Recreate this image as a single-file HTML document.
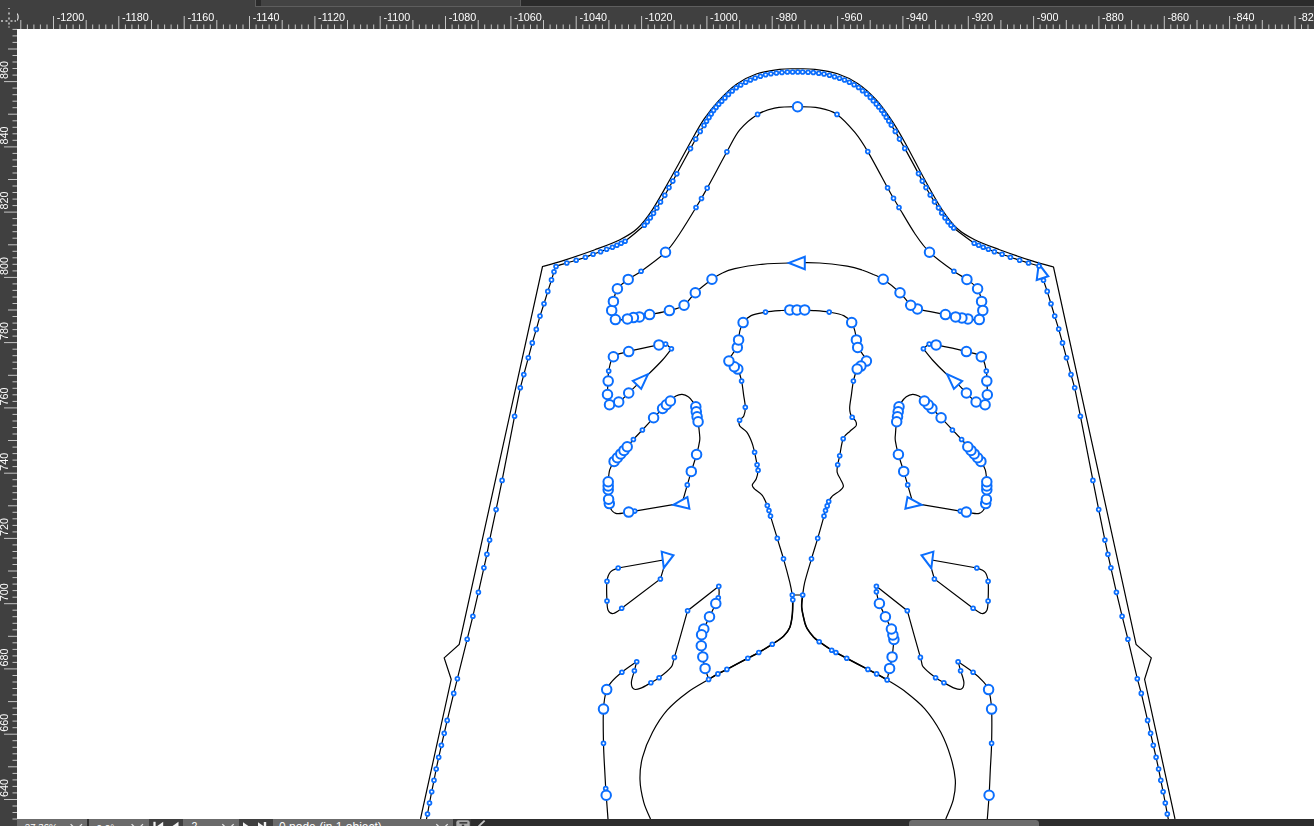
<!DOCTYPE html>
<html><head><meta charset="utf-8"><title>Canvas</title>
<style>
html,body{margin:0;padding:0;background:#fff;overflow:hidden}
body{width:1314px;height:826px;position:relative;font-family:"Liberation Sans",sans-serif}
#app{position:absolute;left:0;top:0;width:1314px;height:826px;overflow:hidden;background:#fff}
.abs{position:absolute}
#topband{left:0;top:0;width:1314px;height:29px;background:#404040}
#leftruler{left:0;top:0;width:17px;height:826px;background:#404040}
#tabline{left:255px;top:6px;width:1059px;height:1px;background:#5e5e5e}
#tabl{left:255px;top:0;width:1px;height:7px;background:#5e5e5e}
#tabdark{left:256px;top:0;width:5px;height:6px;background:#2b2b2b}
#tabmid{left:261px;top:0;width:259px;height:6px;background:#434343}
#tabsep{left:520px;top:0;width:1px;height:6px;background:#5a5a5a}
#tabright{left:521px;top:0;width:793px;height:6px;background:#2b2b2b}
#bottom{left:17px;top:819px;width:1297px;height:7px;background:#2d2d2d}
.fld{top:819px;height:7px;background:#6b6b6b;color:#fff;font-size:12px;line-height:14px;overflow:hidden;white-space:nowrap}
.fld span{position:absolute;top:2px}
#thumb{left:908.5px;top:820px;width:130.5px;height:10px;background:#6c6c6c;border-radius:3.5px}
svg{position:absolute;left:0;top:0}
</style></head><body><div id="app">
<div class="abs" id="topband"></div>
<div class="abs" id="leftruler"></div>
<div class="abs" id="tabline"></div><div class="abs" id="tabl"></div><div class="abs" id="tabdark"></div><div class="abs" id="tabmid"></div><div class="abs" id="tabsep"></div><div class="abs" id="tabright"></div>
<div class="abs" id="bottom"></div>
<div class="abs fld" style="left:17px;width:70px"></div>
<div class="abs fld" style="left:89px;width:60px"></div>
<div class="abs fld" style="left:183px;width:56px"></div>
<div class="abs fld" style="left:273px;width:180px"></div>
<div class="abs" style="left:149px;top:819px;width:34px;height:7px;background:#3f3f3f"></div>
<div class="abs" style="left:239px;top:819px;width:34px;height:7px;background:#3f3f3f"></div>
<div class="abs" style="left:453px;top:819px;width:18px;height:7px;background:#393939"></div>
<div class="abs" id="thumb"></div>
<svg width="1314" height="826" viewBox="0 0 1314 826">
<defs><clipPath id="cv"><rect x="17" y="29" width="1297" height="790"/></clipPath><clipPath id="tr"><rect x="17" y="7" width="1297" height="22"/></clipPath></defs>
<g clip-path="url(#cv)">
<g fill="none" stroke="#000" stroke-width="1.2" stroke-linejoin="miter">
<path d="M420.5 819L451.2 679.4L444.2 657.9L459.2 644.5L542.5 266.5C545.9 265.5 553.7 263.7 562.4 260.9C571.2 258.1 585.3 253.2 594.9 249.7C604.5 246.2 612.8 243.3 619.9 239.7C626.9 236.2 631.9 233.5 637.3 228.5C642.7 223.5 646.9 217.9 652.3 209.8C657.7 201.7 663.6 190.7 669.8 179.8C675.9 168.9 683.6 154.6 689.2 144.5C694.9 134.4 699 126.5 704 119.2C708.9 111.8 713.5 106.3 719 100.4C724.4 94.6 730.2 88.6 736.5 84.2C742.9 79.8 749.7 76.3 756.9 73.8C764.1 71.4 772.9 70.2 779.6 69.3C786.3 68.5 791.2 68.8 797.1 68.8C803 68.8 808.2 68.5 814.9 69.3C821.7 70.2 830.5 71.5 837.6 73.8C844.8 76.2 851.7 79.5 858 83.7C864.3 87.9 870.2 93.4 875.6 99.2C881 105 885.6 111.3 890.5 118.7C895.5 126 899.6 133 905.3 143.2C911 153.4 918.6 168.7 924.8 179.8C930.9 190.9 936.8 201.7 942.2 209.8C947.6 217.9 951.8 223.5 957.2 228.5C962.6 233.5 967.6 236.2 974.7 239.7C981.8 243.3 990.1 246.2 999.6 249.7C1009.2 253.2 1023.1 258.1 1032.1 260.9C1041.1 263.8 1049.9 266 1053.5 267L1136.1 644.5L1151.3 657.9L1144.6 679.4L1175 819"/>
<path d="M426.5 819L427.5 814L429.5 803L431.7 791.7L434 780.3L436.2 769L438.7 757.3L441.4 745.3L444.2 733.3L447.2 720.4L453.7 693.4L457.4 678.7L467.2 639.2L467.2 639.2L472.9 616.2L478.4 592.3L483.9 567.8L486.9 554.3L489.6 540.1L496.1 509.6L502.1 480.4L514.6 416.2L520.3 387.8L523.8 374.6L528.3 357.8L532.3 342.9L536.3 329.4L540 316.1L544 303.7L547.8 291.4L551.5 279.9L554 271.7C554.4 270.8 553.9 267.9 556 266.5C558.2 265 563.4 264 566.8 263C570.1 261.9 573.1 261.2 576.2 260.2C579.3 259.2 582.6 258.2 585.4 257.2C588.2 256.2 590.6 255.1 593.1 254.2C595.7 253.3 598.4 252.5 600.6 251.7C602.9 250.9 604.7 250 606.6 249.2C608.6 248.5 610.7 247.9 612.4 247.2C614.1 246.5 615.4 245.9 616.9 245.2C618.3 244.5 619.7 243.9 621.1 243.2C622.5 242.6 621.2 244.2 625.1 241.2C629 238.2 640.6 228.5 644.3 225.2C648 222 646.3 223 647.3 221.8C648.3 220.5 649.3 219.2 650.3 217.8C651.3 216.3 652.5 214.9 653.5 213.3C654.6 211.6 655.6 209.9 656.8 208C658 206.1 659.2 204.2 660.5 202C661.9 199.9 663.4 197.7 664.8 195.3C666.2 192.9 667.7 189.9 669 187.6C670.4 185.2 671.5 183.3 672.8 181.1C674.1 178.8 673.8 179.2 676.8 173.8C679.7 168.4 687.3 154.4 690.5 148.6C693.7 142.8 694.1 142 695.7 139.1C697.4 136.2 698.9 133.7 700.2 131.4C701.6 129.1 702.9 127.1 704 125.4C705 123.7 705.6 122.5 706.5 121.2C707.3 119.8 708.2 118.6 709 117.4C709.8 116.2 710.5 115.1 711.2 113.9C712 112.7 712.7 111.5 713.5 110.4C714.3 109.3 715.1 108.5 716 107.4C716.8 106.4 717.7 105.2 718.7 104.2C719.7 103.1 720.7 102.2 721.7 101.2C722.7 100.1 723.8 99.1 724.9 97.9C726.1 96.8 727.2 95.6 728.4 94.4C729.6 93.3 730.9 92.1 732.2 91C733.5 89.8 734.8 88.7 736.2 87.7C737.6 86.7 739.1 85.9 740.7 85C742.2 84 744 83 745.7 82.2C747.3 81.4 748.8 80.7 750.4 80C752 79.3 753.5 78.6 755.1 78C756.8 77.3 758.6 76.8 760.4 76.2C762.1 75.7 763.9 75.1 765.6 74.7C767.4 74.3 769.1 74 770.9 73.7C772.7 73.4 774.5 73.2 776.4 73C778.2 72.8 780 72.6 781.9 72.5C783.7 72.3 785.6 72.1 787.4 72C789.1 71.9 790.8 72 792.6 72C794.3 72 796.2 72 797.8 72C799.5 72 800.9 71.9 802.6 72C804.3 72 806.3 72.1 808.1 72.2C809.9 72.3 811.5 72.3 813.3 72.5C815.1 72.6 817 73 818.8 73.2C820.6 73.5 822.2 73.6 824 74C825.8 74.3 827.8 74.8 829.5 75.2C831.3 75.7 832.9 76.2 834.5 76.7C836.2 77.2 837.9 77.7 839.5 78.2C841.2 78.8 842.9 79.3 844.5 80C846.2 80.6 847.8 81.4 849.4 82.2C851 83 852.6 83.8 854.1 84.7C855.6 85.6 857.2 86.5 858.6 87.5C860 88.4 861.3 89.6 862.6 90.7C863.9 91.8 865.3 92.8 866.6 93.9C867.9 95.1 869.2 96.3 870.3 97.4C871.5 98.6 872.3 99.6 873.3 100.7C874.3 101.8 875.4 102.9 876.3 103.9C877.2 105 877.9 105.9 878.8 106.9C879.7 108 880.7 109 881.6 110.2C882.4 111.3 883.3 112.5 884.1 113.7C884.8 114.8 885.5 116 886.3 117.2C887.1 118.4 888 119.6 888.8 120.9C889.6 122.2 890.2 123.4 891.3 125.1C892.4 126.9 893.9 129.1 895.3 131.4C896.7 133.7 898 136.3 899.5 139.1C901.1 141.9 901.6 142.6 904.8 148.4C907.9 154.1 915.6 168.1 918.5 173.6C921.4 179 921 178.7 922.3 181.1C923.5 183.4 924.7 185.2 926 187.6C927.3 189.9 928.8 192.7 930.2 195C931.7 197.4 933.1 199.7 934.5 201.8C935.9 203.9 937.3 205.9 938.5 207.8C939.7 209.6 940.6 211.3 941.7 213C942.8 214.7 943.9 216.3 945 217.8C946 219.2 947 220.5 948 221.8C949 223 950 224.2 951 225.2C951.9 226.3 949.8 225 953.7 228C957.6 231 970 240.3 974.2 243.2C978.3 246.1 977.2 244.5 978.7 245.2C980.2 245.9 981.5 246.5 983.2 247.2C984.8 247.9 986.5 248.5 988.4 249.2C990.3 250 992.1 250.9 994.4 251.7C996.7 252.5 999.5 253.3 1002.1 254.2C1004.8 255.1 1007.5 256.2 1010.4 257.2C1013.3 258.2 1016.6 259.2 1019.6 260.2C1022.6 261.2 1025.3 262 1028.5 263C1031.7 263.9 1037.3 265.5 1039 266L1043.5 280.2L1047.2 291.4L1051 303.7L1054.7 316.1L1058.7 329.1L1062.5 342.9L1066.5 357.8L1071 374.6L1074.7 387.8L1080.4 416.2L1092.9 480.4L1098.7 509.6L1104.9 540.1L1107.9 554.3L1110.9 567.8L1116.4 592.3L1122.1 616.2L1127.9 639.2L1127.9 639.2L1137.3 678.7L1141.3 693.4L1147.6 720.4L1150.6 733.3L1153.3 745.3L1156.1 757.3L1158.6 769L1160.8 780.3L1163.1 791.7L1165.3 803L1167.3 814L1168.3 819"/>
<path d="M665.5 252.2C672 245.9 674.7 240.9 679.8 233.5C684.8 226 691.4 215.1 696 207.5C700.6 199.9 702.1 197.3 707.2 188.1C712.4 178.8 721.5 161.5 726.9 151.8C732.3 142.2 734.6 136.1 739.7 129.9C744.8 123.6 751.8 118 757.6 114.4C763.5 110.8 768 109.5 774.6 108.2C781.3 106.9 790 106.7 797.6 106.7C805.1 106.7 813.4 106.9 819.9 108.2C826.5 109.5 831.1 110.4 836.9 114.4C842.7 118.4 849.7 126.2 854.9 132.4C860 138.6 862.4 142.4 867.8 151.6C873.3 160.8 883.3 180 887.6 187.8C891.8 195.6 891.6 195 893.5 198.3C895.5 201.6 895.5 201.7 899 207.5C902.6 213.4 909.7 226 914.8 233.5C919.8 240.9 923 245.9 929.5 252.2C936 258.5 947.6 266.7 953.9 271.2C960.1 275.8 962.9 276.5 966.9 279.4C970.8 282.4 975.1 285 977.6 288.7C980 292.3 980.7 297.8 981.6 301.4C982.5 305 983.2 307.4 982.8 310.4C982.5 313.4 981.8 318.2 979.3 319.6C976.8 321.1 970.8 319.2 967.9 318.9C964.9 318.6 963.9 318.2 961.9 317.9C959.8 317.6 958.4 317.4 955.6 316.9C952.9 316.3 951.8 316 945.4 314.6C939 313.3 923.2 310.5 917.4 308.9C911.6 307.3 913.6 307.9 910.7 305.2C907.8 302.5 904.5 297 900 292.7C895.4 288.4 887.7 282.2 883.2 279.2C878.8 276.2 876.9 276 873.4 274.5C869.9 272.9 866.5 271.3 862.1 270C857.8 268.6 854.2 267.4 847.2 266.2C840.1 265.1 829.3 263.5 819.7 263C810.2 262.4 799.7 262.7 789.8 263C779.8 263.2 769 263.5 759.8 264.5C750.7 265.4 741.1 267.3 734.8 268.7C728.6 270.1 726.1 271.2 722.4 273C718.6 274.7 716.6 275.9 712.1 279.2C707.6 282.5 700 288.4 695.3 292.7C690.6 297 688.4 302.2 684.1 305.2C679.8 308.2 675.1 309.1 669.4 310.6C663.6 312.2 654.6 313.6 649.6 314.6C644.6 315.7 642.1 316.4 639.4 316.9C636.7 317.4 635.4 317.3 633.4 317.6C631.4 318 630.4 318.6 627.4 318.9C624.4 319.2 618.1 321.1 615.4 319.6C612.8 318.2 612 313.4 611.7 310.4C611.4 307.4 612.5 305 613.4 301.4C614.4 297.8 615 292.3 617.4 288.7C619.9 285 624.2 282.4 628.2 279.4C632.1 276.5 634.9 275.8 641.1 271.2C647.4 266.7 659.1 258.5 665.5 252.2Z"/>
<path d="M650.5 819C649.3 816.2 645.5 808.8 643.7 802.2C642 795.7 640.2 787.2 640 779.8C639.8 772.3 640.4 765.2 642.5 757.3C644.6 749.4 648.3 740.2 652.5 732.3C656.6 724.4 661.6 716.5 667.4 709.9C673.3 703.2 680.5 697.5 687.4 692.4C694.3 687.3 703.6 682.5 708.6 679.4C713.7 676.3 714.8 675.6 717.9 673.9C720.9 672.3 721.9 672.1 726.9 669.4C731.8 666.8 742.5 661 747.8 658.2C753.1 655.4 754.7 654.8 758.8 652.5C762.9 650.1 768.2 646.9 772.3 644.2C776.4 641.5 780.6 639 783.5 636.2C786.4 633.4 788.3 631.1 789.8 627.5C791.2 623.9 791.8 619.4 792.3 614.7C792.8 610.1 792.8 603 792.8 599.8C792.8 596.5 792.8 597.9 792.3 595C791.8 592.1 791.2 588.3 789.8 582.3C788.3 576.2 785.6 566.1 783.5 558.8C781.4 551.5 779.4 545.5 777.3 538.3C775.1 531.2 771.9 520.7 770.5 516.1C769.2 511.5 769.6 512.4 769 510.6C768.5 508.9 768.4 508.2 767.3 505.6C766.2 503.1 764.4 498.2 762.3 495.4C760.2 492.7 756.5 490.9 754.8 489.2C753.1 487.4 752.1 486.7 752.3 484.9C752.6 483.2 755.4 481.1 756.3 478.7C757.3 476.2 757.9 472.5 758.1 470.2C758.2 467.9 757.6 467.7 757.1 464.7C756.5 461.7 755.4 456 754.6 452.2C753.7 448.5 753.1 445.5 751.8 442.2C750.5 438.9 748.8 434.9 746.8 432.2C744.8 429.5 741 428 739.8 426C738.6 424 738.9 421.9 739.6 420.2C740.3 418.6 742.9 418.2 743.8 416C744.8 413.8 745.4 410.8 745.3 407.3C745.3 403.7 744.2 399.1 743.6 394.8C743 390.4 742.5 385.3 741.6 381.1C740.6 376.8 739 371.4 737.8 369.1C736.6 366.7 735.8 368.1 734.3 366.8C732.8 365.5 729.2 363.2 728.9 361.1C728.5 359 730.9 356.4 732.4 354.1C733.8 351.8 736.3 349.7 737.3 347.4C738.4 345 738.2 342.6 738.6 339.9C739 337.2 739.1 334 739.8 331.1C740.6 328.2 741.2 325.2 743.1 322.6C745 320.1 747.3 317.4 751.1 315.6C754.8 313.9 760.8 313 765.5 312.1C770.3 311.3 774.5 311 779.8 310.6C785 310.3 791.2 309.9 797 309.9C802.8 309.9 809.4 310.3 814.7 310.6C820.1 311 824.4 311.3 829.2 312.1C834 313 839.9 313.9 843.7 315.6C847.4 317.4 849.8 320.1 851.7 322.6C853.5 325.2 854.1 328.2 854.9 331.1C855.7 334 856 337.2 856.4 339.9C856.9 342.6 856.6 345 857.7 347.4C858.7 349.7 861.2 351.8 862.6 354.1C864.1 356.4 866.7 359.1 866.4 361.1C866.1 363.1 862.4 364.7 860.9 366.1C859.4 367.4 858.4 366.6 857.2 369.1C855.9 371.6 854.4 376.8 853.4 381.1C852.5 385.3 852 390.4 851.4 394.8C850.8 399.1 849.8 404.1 849.7 407.3C849.5 410.4 850 411.8 850.4 413.5C850.8 415.2 851.3 415.9 852.2 417.2C853.1 418.6 855.3 420 855.9 421.5C856.5 422.9 856.9 424.3 855.9 426C854.9 427.6 851.8 429.3 849.7 431.5C847.5 433.6 844.8 434.7 843.2 438.7C841.5 442.8 840.6 451.4 839.7 455.7C838.8 460.1 838.1 461.9 837.7 464.7C837.3 467.5 836.7 469.9 837.2 472.4C837.7 475 839.9 477.6 840.9 479.9C842 482.2 843.6 484.3 843.4 486.2C843.2 488 841.6 489.3 839.7 490.9C837.8 492.6 834 494.4 832.2 496.2C830.4 497.9 829.5 500 828.7 501.6C827.9 503.3 827.7 504.4 827.2 505.9C826.7 507.4 826 508.9 825.5 510.6C824.9 512.3 825.2 511.5 824 516.1C822.7 520.7 819.8 531.2 817.7 538.3C815.6 545.5 813.6 551.5 811.5 558.8C809.3 566.1 806.2 576.2 804.7 582.3C803.3 588.3 803.2 590.9 802.7 595C802.2 599.2 801.4 602.7 801.7 607.2C802.1 611.8 803.8 618.6 804.7 622.2C805.7 625.8 805.8 626.3 807.2 628.7C808.7 631.2 811.5 634.8 813.5 637C815.5 639.1 816.2 639.5 819.2 641.7C822.3 643.9 828.9 648.4 831.7 650.2C834.5 652 833.4 651.1 835.9 652.5C838.4 653.8 841.3 655.4 846.7 658.2C852 661 862.9 666.8 867.9 669.4C872.9 672.1 873.4 672.2 876.6 673.9C879.8 675.7 882.5 677 887.1 679.9C891.8 682.8 898.3 686.4 904.6 691.1C910.8 695.9 918.5 701.8 924.6 708.6C930.6 715.5 936.4 724.2 940.8 732.3C945.1 740.4 948.4 749.4 950.8 757.3C953.2 765.2 954.8 772.7 955.3 779.8C955.7 786.8 954.9 793.2 953.3 799.7C951.7 806.3 947 815.7 945.8 819"/>
<path d="M792.3 595L802.7 595" stroke-width="1.0"/>
<path d="M708.6 679.4C710.2 678.5 714.8 675.6 717.9 673.9C720.9 672.3 721.9 672.1 726.9 669.4C731.8 666.8 742.5 661 747.8 658.2C753.1 655.4 754.7 654.8 758.8 652.5C762.9 650.1 768.2 646.9 772.3 644.2C776.4 641.5 780.6 639 783.5 636.2C786.4 633.4 788.3 631.1 789.8 627.5C791.2 623.9 791.8 619.4 792.3 614.7C792.8 610.1 792.7 602.2 792.8 599.8" stroke-width="1.55"/>
<path d="M802.7 595C802.6 597 801.4 602.7 801.7 607.2C802.1 611.8 803.8 618.6 804.7 622.2C805.7 625.8 805.8 626.3 807.2 628.7C808.7 631.2 811.5 634.8 813.5 637C815.5 639.1 816.2 639.5 819.2 641.7C822.3 643.9 828.9 648.4 831.7 650.2C834.5 652 833.4 651.1 835.9 652.5C838.4 653.8 841.3 655.4 846.7 658.2C852 661 862.9 666.8 867.9 669.4C872.9 672.1 873.4 672.2 876.6 673.9C879.8 675.7 885.4 678.9 887.1 679.9" stroke-width="1.55"/>
<path d="M671.4 348.8C669.9 350.7 666.2 355.9 662.5 360C658.8 364.1 653 369.8 649.4 373.3C645.8 376.8 644.4 377.8 640.9 381.1C637.4 384.3 630.7 391 628.7 393C627 394.5 621.9 400.1 618.7 402C615.5 404 611.3 406 609.5 404.8C607.6 403.5 607.7 398.5 607.5 394.5C607.2 390.6 608 385 608.2 381.1C608.4 377.1 607.8 375.1 608.7 371.1C609.6 367 610.1 360.1 613.4 356.8C616.8 353.6 621.1 353.6 628.7 351.6C636.2 349.6 652.7 346.1 658.9 344.9C665 343.6 663.5 343.4 665.6 344.1C667.7 344.8 670.4 348 671.4 348.8Z"/>
<path d="M923.4 348.8C924.9 350.7 928.8 355.9 932.5 360C936.2 364.1 941.9 369.8 945.6 373.3C949.3 376.8 951.4 377.8 954.9 381.1C958.3 384.3 964.4 391 966.4 393C968 394.5 973 400.1 976.1 402C979.2 404 983.2 406 985.1 404.8C987 403.6 987 398.7 987.3 394.8C987.6 390.8 987 385 986.8 381.1C986.7 377.1 987.2 375.1 986.3 371.1C985.4 367 984.7 360.1 981.3 356.8C978 353.6 973.9 353.6 966.4 351.6C958.8 349.6 942.4 346.1 936.1 344.9C929.9 343.6 931.3 343.4 929.2 344.1C927 344.8 924.4 348 923.4 348.8Z"/>
<path d="M682.1 503.1L634.7 511.1C633.7 511.3 630.7 511.8 628.7 512.1C626.7 512.5 624.5 512.9 622.8 513.2C621.1 513.5 619.6 513.7 618.3 513.7C617 513.7 616.1 513.5 615.2 513.1C614.3 512.8 613.6 512.2 612.9 511.6C612.2 511 611.5 510.2 611 509.3C610.5 508.4 609.9 507.4 609.6 506.5C609.3 505.6 609.5 504.8 609.3 503.6C609.1 502.4 608.8 501.5 608.6 499.2C608.4 496.9 608.3 492 608.2 489.8C608.1 487.6 608.2 487.2 608.2 485.9C608.2 484.5 608 484.4 608.2 481.7C608.5 479 608.7 473.3 609.7 469.9C610.7 466.5 612.8 463.4 614.1 461.4C615.4 459.4 616.3 458.9 617.4 457.7C618.5 456.4 619.7 455.1 620.8 453.9C621.9 452.7 622.9 451.6 624 450.4C625.1 449.2 625.6 448.5 627.2 446.7C628.8 444.9 630.9 442.3 633.4 439.5C635.9 436.7 639 433.6 642.4 430C645.8 426.3 650.3 421.3 653.6 417.7C657 414.2 660.5 410.7 662.6 408.5C664.7 406.3 665.1 406 666.4 404.8C667.7 403.5 668.8 402.5 670.4 401C671.9 399.6 673.9 397.1 675.9 396C677.8 394.9 680 394.2 682.1 394.3C684.2 394.4 686.5 395.4 688.3 396.8C690.2 398.1 692.1 400.6 693.3 402.3C694.6 403.9 695.3 405.2 695.8 406.8C696.3 408.3 696.1 410.1 696.3 411.8C696.5 413.4 696.8 415.1 697.1 416.7C697.4 418.4 697.7 418.7 698.1 421.7C698.5 424.7 699.3 431.5 699.6 434.7C699.8 438 700.1 437.9 699.6 441.2C699.1 444.5 698 449.5 696.6 454.5C695.2 459.5 692.8 466.3 691.3 471.4C689.8 476.5 688 482.6 687.3 484.9L682.1 503.1Z"/>
<path d="M912.9 503.1L960.3 511.1C961.3 511.3 964.3 511.8 966.3 512.1C968.3 512.5 970.5 512.9 972.2 513.2C973.9 513.5 975.4 513.7 976.7 513.7C978 513.7 978.9 513.5 979.8 513.1C980.7 512.8 981.4 512.2 982.1 511.6C982.8 511 983.5 510.2 984 509.3C984.5 508.4 985.1 507.4 985.4 506.5C985.7 505.6 985.5 504.8 985.7 503.6C985.9 502.4 986.2 501.5 986.4 499.2C986.6 496.9 986.7 492 986.8 489.8C986.9 487.6 986.8 487.2 986.8 485.9C986.8 484.5 987 484.4 986.8 481.7C986.5 479 986.3 473.3 985.3 469.9C984.3 466.5 982.2 463.4 980.9 461.4C979.6 459.4 978.7 458.9 977.6 457.7C976.5 456.4 975.3 455.1 974.2 453.9C973.1 452.7 972.1 451.6 971 450.4C969.9 449.2 969.4 448.5 967.8 446.7C966.2 444.9 966.1 444.3 961.6 439.5C957.1 434.7 946 422.9 941 417.7C936.1 412.6 934.2 410.7 932 408.5C929.9 406.3 929.5 406 928.3 404.8C927.1 403.5 926.1 402.5 924.6 401C923 399.6 920.8 397.1 918.8 396C916.8 394.9 914.7 394.2 912.6 394.3C910.5 394.4 908.2 395.4 906.3 396.8C904.5 398.1 902.5 400.6 901.3 402.3C900.1 403.9 899.6 405.2 899.1 406.8C898.6 408.3 898.6 410.1 898.4 411.8C898.1 413.4 897.9 415.1 897.6 416.7C897.3 418.4 897 418.7 896.6 421.7C896.2 424.7 895.6 431.5 895.4 434.7C895.1 438 894.9 437.9 895.4 441.2C895.9 444.5 897 449.5 898.4 454.5C899.8 459.5 902.2 466.3 903.7 471.4C905.2 476.5 907 482.6 907.7 484.9L912.9 503.1Z"/>
<path d="M666.3 559.5L660.4 579L621.7 608.2C620.3 609.1 615.7 613.1 613.4 613.5C611.2 613.9 609.3 612.6 608.2 610.5C607.1 608.4 607.2 605.9 607 601C606.7 596.1 606.4 586.1 607 581.3C607.5 576.4 608.6 574 610.5 571.8C612.3 569.6 616.9 568.7 618.2 568L666.3 559.5Z"/>
<path d="M928.8 559.5L934.4 579L973.1 608.2C974.5 609.1 979.3 613.1 981.6 613.5C983.9 613.9 985.7 612.6 986.8 610.5C987.9 608.4 987.9 605.9 988.1 601C988.3 596.1 988.6 586.1 988.1 581.3C987.5 576.4 986.7 574 984.8 571.8C983 569.6 978.2 568.7 976.8 568L928.8 559.5Z"/>
<path d="M718.8 586.3L687.6 610.7C685.4 618.5 677.1 648 674.4 657.4C671.6 666.9 673.4 664.1 670.9 667.4C668.3 670.8 662.5 675.1 659.1 677.7C655.8 680.2 653.9 680.9 650.9 682.7C647.9 684.4 643.7 687.1 640.9 688.1C638.1 689.2 635.5 690.1 633.9 689.1C632.3 688.2 631.3 685.5 631.4 682.4C631.5 679.3 633.5 674.1 634.4 670.7C635.3 667.2 636.3 663.2 636.7 661.7C634.2 663.4 626 668.9 621.9 672.2C617.9 675.4 614.7 678.2 612.2 681.2C609.7 684.1 608.2 685 606.7 689.6C605.2 694.3 604 700.2 603.5 709.1C602.9 718.1 603.3 733.2 603.5 743.3C603.7 753.4 604.3 762.2 604.7 769.8C605.1 777.3 605.5 784.3 605.7 788.5C606 792.7 605.8 790.2 606.2 795.2C606.6 800.3 607.7 815 608 819"/>
<path d="M718.8 586.3C718.8 587.7 719.5 591.9 719 594.8C718.5 597.6 717.4 599.8 715.8 603.5C714.2 607.2 711.5 612.5 709.5 616.7C707.6 621 705.1 626 703.8 629C702.5 632 702 631.9 701.6 634.7C701.1 637.5 701.1 642 701.3 645.7C701.5 649.4 702.2 653.2 702.8 656.9C703.4 660.7 704.1 664.7 705.1 668.4C706.1 672.2 708.2 677.6 708.8 679.4"/>
<path d="M876.4 586.3C876.4 587.2 875.9 588.9 876.4 591.8C876.9 594.6 877.9 599.3 879.4 603.5C880.9 607.7 883.4 612.5 885.4 616.7C887.4 621 890 626 891.4 629C892.7 632 892.9 632.9 893.4 634.7C893.8 636.5 894.1 635.8 893.9 639.5C893.6 643.2 892.8 652.1 892.1 656.9C891.4 661.8 890.4 664.6 889.6 668.4C888.8 672.3 887.5 678 887.1 679.9"/>
<path d="M876.4 586.3L907.3 610.7C909.5 618.5 917.7 648 920.4 657.4C923.1 666.9 921.1 664.1 923.7 667.4C926.2 670.8 932.3 675.1 935.6 677.7C939 680.2 940.8 680.9 943.9 682.7C947 684.4 951.5 687.1 954.4 688.1C957.3 689.2 959.8 690.1 961.4 689.1C962.9 688.2 964 685.5 963.9 682.4C963.7 679.3 961.6 674.1 960.6 670.7C959.7 667.2 958.5 663.2 958.1 661.7C960.6 663.4 969 668.9 973.1 672.2C977.2 675.4 980.3 678.2 982.8 681.2C985.4 684.1 987.1 685 988.6 689.6C990 694.3 991.1 700.2 991.6 709.1C992.1 718.1 991.8 733.2 991.6 743.3C991.4 753.4 990.7 761.1 990.3 769.8C989.9 778.4 989.6 787 989.1 795.2C988.6 803.4 987.6 815 987.3 819"/>
</g>
<g fill="#fff" stroke="#0b6efd" stroke-width="2">
<path d="M1038.8 263.8L1036.7 280L1048.3 276.3Z"/>
<circle cx="1039" cy="266" r="1.95" stroke-width="1.75"/>
<circle cx="1028.5" cy="263" r="1.95" stroke-width="1.75"/>
<circle cx="1019.6" cy="260.2" r="1.95" stroke-width="1.75"/>
<circle cx="1010.4" cy="257.2" r="1.95" stroke-width="1.75"/>
<circle cx="1002.1" cy="254.2" r="1.95" stroke-width="1.75"/>
<circle cx="994.4" cy="251.7" r="1.95" stroke-width="1.75"/>
<circle cx="988.4" cy="249.2" r="1.95" stroke-width="1.75"/>
<circle cx="983.2" cy="247.2" r="1.95" stroke-width="1.75"/>
<circle cx="978.7" cy="245.2" r="1.95" stroke-width="1.75"/>
<circle cx="974.2" cy="243.2" r="1.95" stroke-width="1.75"/>
<circle cx="953.7" cy="228" r="1.95" stroke-width="1.75"/>
<circle cx="951" cy="225.2" r="1.95" stroke-width="1.75"/>
<circle cx="948" cy="221.8" r="1.95" stroke-width="1.75"/>
<circle cx="945" cy="217.8" r="1.95" stroke-width="1.75"/>
<circle cx="941.7" cy="213" r="1.95" stroke-width="1.75"/>
<circle cx="938.5" cy="207.8" r="1.95" stroke-width="1.75"/>
<circle cx="934.5" cy="201.8" r="1.95" stroke-width="1.75"/>
<circle cx="930.2" cy="195" r="1.95" stroke-width="1.75"/>
<circle cx="926" cy="187.6" r="1.95" stroke-width="1.75"/>
<circle cx="922.3" cy="181.1" r="1.95" stroke-width="1.75"/>
<circle cx="918.5" cy="173.6" r="1.95" stroke-width="1.75"/>
<circle cx="904.8" cy="148.4" r="1.95" stroke-width="1.75"/>
<circle cx="899.5" cy="139.1" r="1.95" stroke-width="1.75"/>
<circle cx="895.3" cy="131.4" r="1.95" stroke-width="1.75"/>
<circle cx="891.3" cy="125.1" r="1.95" stroke-width="1.75"/>
<circle cx="888.8" cy="120.9" r="1.95" stroke-width="1.75"/>
<circle cx="886.3" cy="117.2" r="1.95" stroke-width="1.75"/>
<circle cx="884.1" cy="113.7" r="1.95" stroke-width="1.75"/>
<circle cx="881.6" cy="110.2" r="1.95" stroke-width="1.75"/>
<circle cx="878.8" cy="106.9" r="1.95" stroke-width="1.75"/>
<circle cx="876.3" cy="103.9" r="1.95" stroke-width="1.75"/>
<circle cx="873.3" cy="100.7" r="1.95" stroke-width="1.75"/>
<circle cx="870.3" cy="97.4" r="1.95" stroke-width="1.75"/>
<circle cx="866.6" cy="93.9" r="1.95" stroke-width="1.75"/>
<circle cx="862.6" cy="90.7" r="1.95" stroke-width="1.75"/>
<circle cx="858.6" cy="87.5" r="1.95" stroke-width="1.75"/>
<circle cx="854.1" cy="84.7" r="1.95" stroke-width="1.75"/>
<circle cx="849.4" cy="82.2" r="1.95" stroke-width="1.75"/>
<circle cx="844.5" cy="80" r="1.95" stroke-width="1.75"/>
<circle cx="839.5" cy="78.2" r="1.95" stroke-width="1.75"/>
<circle cx="834.5" cy="76.7" r="1.95" stroke-width="1.75"/>
<circle cx="829.5" cy="75.2" r="1.95" stroke-width="1.75"/>
<circle cx="824" cy="74" r="1.95" stroke-width="1.75"/>
<circle cx="818.8" cy="73.2" r="1.95" stroke-width="1.75"/>
<circle cx="813.3" cy="72.5" r="1.95" stroke-width="1.75"/>
<circle cx="808.1" cy="72.2" r="1.95" stroke-width="1.75"/>
<circle cx="802.6" cy="72" r="1.95" stroke-width="1.75"/>
<circle cx="797.8" cy="72" r="1.95" stroke-width="1.75"/>
<circle cx="792.6" cy="72" r="1.95" stroke-width="1.75"/>
<circle cx="787.4" cy="72" r="1.95" stroke-width="1.75"/>
<circle cx="781.9" cy="72.5" r="1.95" stroke-width="1.75"/>
<circle cx="776.4" cy="73" r="1.95" stroke-width="1.75"/>
<circle cx="770.9" cy="73.7" r="1.95" stroke-width="1.75"/>
<circle cx="765.6" cy="74.7" r="1.95" stroke-width="1.75"/>
<circle cx="760.4" cy="76.2" r="1.95" stroke-width="1.75"/>
<circle cx="755.1" cy="78" r="1.95" stroke-width="1.75"/>
<circle cx="750.4" cy="80" r="1.95" stroke-width="1.75"/>
<circle cx="745.7" cy="82.2" r="1.95" stroke-width="1.75"/>
<circle cx="740.7" cy="85" r="1.95" stroke-width="1.75"/>
<circle cx="736.2" cy="87.7" r="1.95" stroke-width="1.75"/>
<circle cx="732.2" cy="91" r="1.95" stroke-width="1.75"/>
<circle cx="728.4" cy="94.4" r="1.95" stroke-width="1.75"/>
<circle cx="724.9" cy="97.9" r="1.95" stroke-width="1.75"/>
<circle cx="721.7" cy="101.2" r="1.95" stroke-width="1.75"/>
<circle cx="718.7" cy="104.2" r="1.95" stroke-width="1.75"/>
<circle cx="716" cy="107.4" r="1.95" stroke-width="1.75"/>
<circle cx="713.5" cy="110.4" r="1.95" stroke-width="1.75"/>
<circle cx="711.2" cy="113.9" r="1.95" stroke-width="1.75"/>
<circle cx="709" cy="117.4" r="1.95" stroke-width="1.75"/>
<circle cx="706.5" cy="121.2" r="1.95" stroke-width="1.75"/>
<circle cx="704" cy="125.4" r="1.95" stroke-width="1.75"/>
<circle cx="700.2" cy="131.4" r="1.95" stroke-width="1.75"/>
<circle cx="695.7" cy="139.1" r="1.95" stroke-width="1.75"/>
<circle cx="690.5" cy="148.6" r="1.95" stroke-width="1.75"/>
<circle cx="676.8" cy="173.8" r="1.95" stroke-width="1.75"/>
<circle cx="672.8" cy="181.1" r="1.95" stroke-width="1.75"/>
<circle cx="669" cy="187.6" r="1.95" stroke-width="1.75"/>
<circle cx="664.8" cy="195.3" r="1.95" stroke-width="1.75"/>
<circle cx="660.5" cy="202" r="1.95" stroke-width="1.75"/>
<circle cx="656.8" cy="208" r="1.95" stroke-width="1.75"/>
<circle cx="653.5" cy="213.3" r="1.95" stroke-width="1.75"/>
<circle cx="650.3" cy="217.8" r="1.95" stroke-width="1.75"/>
<circle cx="647.3" cy="221.8" r="1.95" stroke-width="1.75"/>
<circle cx="644.3" cy="225.2" r="1.95" stroke-width="1.75"/>
<circle cx="625.1" cy="241.2" r="1.95" stroke-width="1.75"/>
<circle cx="621.1" cy="243.2" r="1.95" stroke-width="1.75"/>
<circle cx="616.9" cy="245.2" r="1.95" stroke-width="1.75"/>
<circle cx="612.4" cy="247.2" r="1.95" stroke-width="1.75"/>
<circle cx="606.6" cy="249.2" r="1.95" stroke-width="1.75"/>
<circle cx="600.6" cy="251.7" r="1.95" stroke-width="1.75"/>
<circle cx="593.1" cy="254.2" r="1.95" stroke-width="1.75"/>
<circle cx="585.4" cy="257.2" r="1.95" stroke-width="1.75"/>
<circle cx="576.2" cy="260.2" r="1.95" stroke-width="1.75"/>
<circle cx="566.8" cy="263" r="1.95" stroke-width="1.75"/>
<circle cx="556" cy="266.5" r="1.95" stroke-width="1.75"/>
<circle cx="554" cy="271.7" r="1.95" stroke-width="1.75"/>
<circle cx="551.5" cy="279.9" r="1.95" stroke-width="1.75"/>
<circle cx="547.8" cy="291.4" r="1.95" stroke-width="1.75"/>
<circle cx="544" cy="303.7" r="1.95" stroke-width="1.75"/>
<circle cx="540" cy="316.1" r="1.95" stroke-width="1.75"/>
<circle cx="536.3" cy="329.4" r="1.95" stroke-width="1.75"/>
<circle cx="532.3" cy="342.9" r="1.95" stroke-width="1.75"/>
<circle cx="528.3" cy="357.8" r="1.95" stroke-width="1.75"/>
<circle cx="523.8" cy="374.6" r="1.95" stroke-width="1.75"/>
<circle cx="520.3" cy="387.8" r="1.95" stroke-width="1.75"/>
<circle cx="514.6" cy="416.2" r="1.95" stroke-width="1.75"/>
<circle cx="502.1" cy="480.4" r="1.95" stroke-width="1.75"/>
<circle cx="496.1" cy="509.6" r="1.95" stroke-width="1.75"/>
<circle cx="489.6" cy="540.1" r="1.95" stroke-width="1.75"/>
<circle cx="486.9" cy="554.3" r="1.95" stroke-width="1.75"/>
<circle cx="483.9" cy="567.8" r="1.95" stroke-width="1.75"/>
<circle cx="478.4" cy="592.3" r="1.95" stroke-width="1.75"/>
<circle cx="472.9" cy="616.2" r="1.95" stroke-width="1.75"/>
<circle cx="467.2" cy="639.2" r="1.95" stroke-width="1.75"/>
<circle cx="457.4" cy="678.7" r="1.95" stroke-width="1.75"/>
<circle cx="453.7" cy="693.4" r="1.95" stroke-width="1.75"/>
<circle cx="447.2" cy="720.4" r="1.95" stroke-width="1.75"/>
<circle cx="444.2" cy="733.3" r="1.95" stroke-width="1.75"/>
<circle cx="441.4" cy="745.3" r="1.95" stroke-width="1.75"/>
<circle cx="438.7" cy="757.3" r="1.95" stroke-width="1.75"/>
<circle cx="436.2" cy="769" r="1.95" stroke-width="1.75"/>
<circle cx="434" cy="780.3" r="1.95" stroke-width="1.75"/>
<circle cx="431.7" cy="791.7" r="1.95" stroke-width="1.75"/>
<circle cx="429.5" cy="803" r="1.95" stroke-width="1.75"/>
<circle cx="427.5" cy="814" r="1.95" stroke-width="1.75"/>
<circle cx="1167.3" cy="814" r="1.95" stroke-width="1.75"/>
<circle cx="1165.3" cy="803" r="1.95" stroke-width="1.75"/>
<circle cx="1163.1" cy="791.7" r="1.95" stroke-width="1.75"/>
<circle cx="1160.8" cy="780.3" r="1.95" stroke-width="1.75"/>
<circle cx="1158.6" cy="769" r="1.95" stroke-width="1.75"/>
<circle cx="1156.1" cy="757.3" r="1.95" stroke-width="1.75"/>
<circle cx="1153.3" cy="745.3" r="1.95" stroke-width="1.75"/>
<circle cx="1150.6" cy="733.3" r="1.95" stroke-width="1.75"/>
<circle cx="1147.6" cy="720.4" r="1.95" stroke-width="1.75"/>
<circle cx="1141.3" cy="693.4" r="1.95" stroke-width="1.75"/>
<circle cx="1137.3" cy="678.7" r="1.95" stroke-width="1.75"/>
<circle cx="1127.9" cy="639.2" r="1.95" stroke-width="1.75"/>
<circle cx="1122.1" cy="616.2" r="1.95" stroke-width="1.75"/>
<circle cx="1116.4" cy="592.3" r="1.95" stroke-width="1.75"/>
<circle cx="1110.9" cy="567.8" r="1.95" stroke-width="1.75"/>
<circle cx="1107.9" cy="554.3" r="1.95" stroke-width="1.75"/>
<circle cx="1104.9" cy="540.1" r="1.95" stroke-width="1.75"/>
<circle cx="1098.7" cy="509.6" r="1.95" stroke-width="1.75"/>
<circle cx="1092.9" cy="480.4" r="1.95" stroke-width="1.75"/>
<circle cx="1080.4" cy="416.2" r="1.95" stroke-width="1.75"/>
<circle cx="1074.7" cy="387.8" r="1.95" stroke-width="1.75"/>
<circle cx="1071" cy="374.6" r="1.95" stroke-width="1.75"/>
<circle cx="1066.5" cy="357.8" r="1.95" stroke-width="1.75"/>
<circle cx="1062.5" cy="342.9" r="1.95" stroke-width="1.75"/>
<circle cx="1058.7" cy="329.1" r="1.95" stroke-width="1.75"/>
<circle cx="1054.7" cy="316.1" r="1.95" stroke-width="1.75"/>
<circle cx="1051" cy="303.7" r="1.95" stroke-width="1.75"/>
<circle cx="1047.2" cy="291.4" r="1.95" stroke-width="1.75"/>
<circle cx="1043.5" cy="280.2" r="1.95" stroke-width="1.75"/>
<path d="M788.9 262.9L804.8 256.7L804.8 269.2Z"/>
<circle cx="712" cy="279.2" r="4.75"/>
<circle cx="695.3" cy="292.7" r="4.75"/>
<circle cx="684.1" cy="305.2" r="4.75"/>
<circle cx="669.4" cy="310.6" r="4.75"/>
<circle cx="649.6" cy="314.6" r="4.75"/>
<circle cx="639.4" cy="316.9" r="4.75"/>
<circle cx="633.4" cy="317.6" r="4.75"/>
<circle cx="627.4" cy="318.9" r="4.75"/>
<circle cx="615.4" cy="319.6" r="4.75"/>
<circle cx="611.7" cy="310.4" r="4.75"/>
<circle cx="613.4" cy="301.4" r="4.75"/>
<circle cx="617.4" cy="288.7" r="4.75"/>
<circle cx="628.2" cy="279.4" r="4.75"/>
<circle cx="641.1" cy="271.2" r="1.95" stroke-width="1.75"/>
<circle cx="665.5" cy="252.2" r="4.75"/>
<circle cx="696" cy="207.5" r="1.95" stroke-width="1.75"/>
<circle cx="701.5" cy="198.5" r="1.95" stroke-width="1.75"/>
<circle cx="707.2" cy="188.1" r="1.95" stroke-width="1.75"/>
<circle cx="726.9" cy="151.8" r="1.95" stroke-width="1.75"/>
<circle cx="757.6" cy="114.4" r="1.95" stroke-width="1.75"/>
<circle cx="797.6" cy="106.7" r="4.75"/>
<circle cx="837" cy="114.4" r="1.95" stroke-width="1.75"/>
<circle cx="867.8" cy="151.6" r="1.95" stroke-width="1.75"/>
<circle cx="887.6" cy="187.8" r="1.95" stroke-width="1.75"/>
<circle cx="893.5" cy="198.3" r="1.95" stroke-width="1.75"/>
<circle cx="899" cy="207.5" r="1.95" stroke-width="1.75"/>
<circle cx="929.5" cy="252.2" r="4.75"/>
<circle cx="953.9" cy="271.2" r="1.95" stroke-width="1.75"/>
<circle cx="966.9" cy="279.4" r="4.75"/>
<circle cx="977.6" cy="288.7" r="4.75"/>
<circle cx="981.6" cy="301.4" r="4.75"/>
<circle cx="982.8" cy="310.4" r="4.75"/>
<circle cx="979.3" cy="319.6" r="4.75"/>
<circle cx="967.9" cy="318.9" r="4.75"/>
<circle cx="961.9" cy="317.9" r="4.75"/>
<circle cx="955.6" cy="316.9" r="4.75"/>
<circle cx="945.4" cy="314.6" r="4.75"/>
<circle cx="917.4" cy="308.9" r="4.75"/>
<circle cx="910.7" cy="305.2" r="4.75"/>
<circle cx="900" cy="292.7" r="4.75"/>
<circle cx="883.2" cy="279.2" r="4.75"/>
<circle cx="708.6" cy="679.4" r="1.95" stroke-width="1.75"/>
<circle cx="717.9" cy="673.9" r="1.95" stroke-width="1.75"/>
<circle cx="726.9" cy="669.4" r="1.95" stroke-width="1.75"/>
<circle cx="747.8" cy="658.2" r="1.95" stroke-width="1.75"/>
<circle cx="758.8" cy="652.5" r="1.95" stroke-width="1.75"/>
<circle cx="772.3" cy="644.2" r="1.95" stroke-width="1.75"/>
<circle cx="792.8" cy="599.8" r="1.95" stroke-width="1.75"/>
<circle cx="792.3" cy="595" r="1.95" stroke-width="1.75"/>
<circle cx="783.5" cy="558.8" r="1.95" stroke-width="1.75"/>
<circle cx="777.3" cy="538.3" r="1.95" stroke-width="1.75"/>
<circle cx="770.5" cy="516.1" r="1.95" stroke-width="1.75"/>
<circle cx="769" cy="510.6" r="1.95" stroke-width="1.75"/>
<circle cx="767.3" cy="505.6" r="1.95" stroke-width="1.75"/>
<circle cx="758.1" cy="470.2" r="1.95" stroke-width="1.75"/>
<circle cx="757.1" cy="464.7" r="1.95" stroke-width="1.75"/>
<circle cx="754.6" cy="452.2" r="1.95" stroke-width="1.75"/>
<circle cx="739.6" cy="420.2" r="1.95" stroke-width="1.75"/>
<circle cx="745.3" cy="407.3" r="1.95" stroke-width="1.75"/>
<circle cx="741.6" cy="381.1" r="1.95" stroke-width="1.75"/>
<circle cx="737.8" cy="369.1" r="4.75"/>
<circle cx="734.3" cy="366.8" r="4.75"/>
<circle cx="728.9" cy="361.1" r="4.75"/>
<circle cx="737.3" cy="347.4" r="4.75"/>
<circle cx="738.6" cy="339.9" r="4.75"/>
<circle cx="743.1" cy="322.6" r="4.75"/>
<circle cx="765.5" cy="312.1" r="1.95" stroke-width="1.75"/>
<circle cx="789.8" cy="309.9" r="4.75"/>
<circle cx="797" cy="309.9" r="4.75"/>
<circle cx="804.7" cy="309.9" r="4.75"/>
<circle cx="829.2" cy="312.1" r="1.95" stroke-width="1.75"/>
<circle cx="851.7" cy="322.6" r="4.75"/>
<circle cx="856.4" cy="339.9" r="4.75"/>
<circle cx="857.7" cy="347.4" r="4.75"/>
<circle cx="866.4" cy="361.1" r="4.75"/>
<circle cx="860.9" cy="366.1" r="4.75"/>
<circle cx="857.2" cy="369.1" r="4.75"/>
<circle cx="853.4" cy="381.1" r="1.95" stroke-width="1.75"/>
<circle cx="852.2" cy="417.2" r="1.95" stroke-width="1.75"/>
<circle cx="843.2" cy="438.7" r="1.95" stroke-width="1.75"/>
<circle cx="839.7" cy="455.7" r="1.95" stroke-width="1.75"/>
<circle cx="837.7" cy="464.7" r="1.95" stroke-width="1.75"/>
<circle cx="828.7" cy="501.6" r="1.95" stroke-width="1.75"/>
<circle cx="827.2" cy="505.9" r="1.95" stroke-width="1.75"/>
<circle cx="825.5" cy="510.6" r="1.95" stroke-width="1.75"/>
<circle cx="824" cy="516.1" r="1.95" stroke-width="1.75"/>
<circle cx="817.7" cy="538.3" r="1.95" stroke-width="1.75"/>
<circle cx="811.5" cy="558.8" r="1.95" stroke-width="1.75"/>
<circle cx="802.7" cy="595" r="1.95" stroke-width="1.75"/>
<circle cx="819.2" cy="641.7" r="1.95" stroke-width="1.75"/>
<circle cx="831.7" cy="650.2" r="1.95" stroke-width="1.75"/>
<circle cx="835.9" cy="652.5" r="1.95" stroke-width="1.75"/>
<circle cx="846.7" cy="658.2" r="1.95" stroke-width="1.75"/>
<circle cx="867.9" cy="669.4" r="1.95" stroke-width="1.75"/>
<circle cx="876.6" cy="673.9" r="1.95" stroke-width="1.75"/>
<circle cx="887.1" cy="679.9" r="1.95" stroke-width="1.75"/>
<path d="M632.8 380.8L648 374.2L641.2 388.9Z"/>
<circle cx="628.7" cy="393" r="4.75"/>
<circle cx="618.7" cy="402" r="4.75"/>
<circle cx="609.5" cy="404.8" r="4.75"/>
<circle cx="607.5" cy="394.5" r="4.75"/>
<circle cx="608.2" cy="381.1" r="4.75"/>
<circle cx="608.7" cy="371.1" r="1.95" stroke-width="1.75"/>
<circle cx="613.4" cy="356.8" r="4.75"/>
<circle cx="628.7" cy="351.6" r="4.75"/>
<circle cx="658.9" cy="344.9" r="4.75"/>
<circle cx="665.6" cy="344.1" r="1.95" stroke-width="1.75"/>
<circle cx="671.4" cy="348.8" r="1.95" stroke-width="1.75"/>
<path d="M947.1 374.2L962.2 381L953.9 388.9Z"/>
<circle cx="966.4" cy="393" r="4.75"/>
<circle cx="976.1" cy="402" r="4.75"/>
<circle cx="985.1" cy="404.8" r="4.75"/>
<circle cx="987.3" cy="394.8" r="4.75"/>
<circle cx="986.8" cy="381.1" r="4.75"/>
<circle cx="986.3" cy="371.1" r="1.95" stroke-width="1.75"/>
<circle cx="981.3" cy="356.8" r="4.75"/>
<circle cx="966.4" cy="351.6" r="4.75"/>
<circle cx="936.1" cy="344.9" r="4.75"/>
<circle cx="929.2" cy="344.1" r="1.95" stroke-width="1.75"/>
<circle cx="923.4" cy="348.8" r="1.95" stroke-width="1.75"/>
<path d="M673.3 504.8L687.4 497L689.4 508.6Z"/>
<circle cx="634.7" cy="511.1" r="1.95" stroke-width="1.75"/>
<circle cx="628.7" cy="512.1" r="4.75"/>
<circle cx="609.3" cy="503.6" r="4.75"/>
<circle cx="608.6" cy="499.2" r="4.75"/>
<circle cx="608.2" cy="489.8" r="4.75"/>
<circle cx="608.2" cy="485.9" r="4.75"/>
<circle cx="608.2" cy="481.7" r="4.75"/>
<circle cx="614.1" cy="461.4" r="4.75"/>
<circle cx="617.4" cy="457.7" r="4.75"/>
<circle cx="620.8" cy="453.9" r="4.75"/>
<circle cx="624" cy="450.4" r="4.75"/>
<circle cx="627.2" cy="446.7" r="4.75"/>
<circle cx="633.4" cy="439.5" r="1.95" stroke-width="1.75"/>
<circle cx="642.4" cy="430" r="1.95" stroke-width="1.75"/>
<circle cx="653.6" cy="417.7" r="4.75"/>
<circle cx="662.6" cy="408.5" r="4.75"/>
<circle cx="666.4" cy="404.8" r="4.75"/>
<circle cx="670.4" cy="401" r="4.75"/>
<circle cx="695.8" cy="406.8" r="4.75"/>
<circle cx="696.3" cy="411.8" r="4.75"/>
<circle cx="697.1" cy="416.7" r="4.75"/>
<circle cx="698.1" cy="421.7" r="4.75"/>
<circle cx="696.6" cy="454.5" r="4.75"/>
<circle cx="691.3" cy="471.4" r="4.75"/>
<circle cx="687.3" cy="484.9" r="1.95" stroke-width="1.75"/>
<path d="M921.7 504.8L907.5 497L905.4 508.6Z"/>
<circle cx="960.3" cy="511.1" r="1.95" stroke-width="1.75"/>
<circle cx="966.3" cy="512.1" r="4.75"/>
<circle cx="985.7" cy="503.6" r="4.75"/>
<circle cx="986.4" cy="499.2" r="4.75"/>
<circle cx="986.8" cy="489.8" r="4.75"/>
<circle cx="986.8" cy="485.9" r="4.75"/>
<circle cx="986.8" cy="481.7" r="4.75"/>
<circle cx="980.9" cy="461.4" r="4.75"/>
<circle cx="977.6" cy="457.7" r="4.75"/>
<circle cx="974.2" cy="453.9" r="4.75"/>
<circle cx="971" cy="450.4" r="4.75"/>
<circle cx="967.8" cy="446.7" r="4.75"/>
<circle cx="961.6" cy="439.5" r="1.95" stroke-width="1.75"/>
<circle cx="952.4" cy="430" r="1.95" stroke-width="1.75"/>
<circle cx="941.1" cy="417.7" r="4.75"/>
<circle cx="931.9" cy="408.5" r="4.75"/>
<circle cx="928.2" cy="404.8" r="4.75"/>
<circle cx="924.4" cy="401" r="4.75"/>
<circle cx="899" cy="406.8" r="4.75"/>
<circle cx="898.2" cy="411.8" r="4.75"/>
<circle cx="897.5" cy="416.7" r="4.75"/>
<circle cx="896.7" cy="421.7" r="4.75"/>
<circle cx="898.4" cy="454.5" r="4.75"/>
<circle cx="903.7" cy="471.4" r="4.75"/>
<circle cx="907.7" cy="484.9" r="1.95" stroke-width="1.75"/>
<path d="M661.7 551.6L673.5 555.2L663.8 567.9Z"/>
<circle cx="660.4" cy="579" r="1.95" stroke-width="1.75"/>
<circle cx="621.7" cy="608.2" r="1.95" stroke-width="1.75"/>
<circle cx="607" cy="601" r="1.95" stroke-width="1.75"/>
<circle cx="607" cy="581.3" r="1.95" stroke-width="1.75"/>
<circle cx="618.2" cy="568" r="1.95" stroke-width="1.75"/>
<path d="M933.4 551.6L921.5 555.2L931.3 568.1Z"/>
<circle cx="934.4" cy="579" r="1.95" stroke-width="1.75"/>
<circle cx="973.1" cy="608.2" r="1.95" stroke-width="1.75"/>
<circle cx="988.1" cy="601" r="1.95" stroke-width="1.75"/>
<circle cx="988.1" cy="581.3" r="1.95" stroke-width="1.75"/>
<circle cx="976.8" cy="568" r="1.95" stroke-width="1.75"/>
<circle cx="606.2" cy="795.2" r="4.75"/>
<circle cx="605.7" cy="788.5" r="1.95" stroke-width="1.75"/>
<circle cx="603.5" cy="743.3" r="1.95" stroke-width="1.75"/>
<circle cx="603.5" cy="709.1" r="4.75"/>
<circle cx="606.7" cy="689.6" r="4.75"/>
<circle cx="621.9" cy="672.2" r="1.95" stroke-width="1.75"/>
<circle cx="636.7" cy="661.7" r="1.95" stroke-width="1.75"/>
<circle cx="634.4" cy="670.7" r="1.95" stroke-width="1.75"/>
<circle cx="650.9" cy="682.7" r="1.95" stroke-width="1.75"/>
<circle cx="659.1" cy="677.7" r="1.95" stroke-width="1.75"/>
<circle cx="674.4" cy="657.4" r="1.95" stroke-width="1.75"/>
<circle cx="687.6" cy="610.7" r="1.95" stroke-width="1.75"/>
<circle cx="718.8" cy="586.3" r="1.95" stroke-width="1.75"/>
<circle cx="718.3" cy="597.8" r="1.95" stroke-width="1.75"/>
<circle cx="715.8" cy="603.5" r="4.75"/>
<circle cx="709.5" cy="616.7" r="4.75"/>
<circle cx="703.8" cy="629" r="4.75"/>
<circle cx="701.6" cy="634.7" r="4.75"/>
<circle cx="701.3" cy="645.7" r="4.75"/>
<circle cx="702.8" cy="656.9" r="4.75"/>
<circle cx="705.1" cy="668.4" r="4.75"/>
<circle cx="889.6" cy="668.4" r="4.75"/>
<circle cx="892.1" cy="656.9" r="4.75"/>
<circle cx="893.9" cy="639.5" r="4.75"/>
<circle cx="892.9" cy="635" r="4.75"/>
<circle cx="891.4" cy="629" r="4.75"/>
<circle cx="885.4" cy="616.7" r="4.75"/>
<circle cx="879.4" cy="603.5" r="4.75"/>
<circle cx="876.4" cy="591.8" r="1.95" stroke-width="1.75"/>
<circle cx="876.4" cy="586.3" r="1.95" stroke-width="1.75"/>
<circle cx="907.3" cy="610.7" r="1.95" stroke-width="1.75"/>
<circle cx="920.4" cy="657.4" r="1.95" stroke-width="1.75"/>
<circle cx="935.6" cy="677.7" r="1.95" stroke-width="1.75"/>
<circle cx="943.9" cy="682.7" r="1.95" stroke-width="1.75"/>
<circle cx="960.6" cy="670.7" r="1.95" stroke-width="1.75"/>
<circle cx="958.1" cy="661.7" r="1.95" stroke-width="1.75"/>
<circle cx="973.1" cy="672.2" r="1.95" stroke-width="1.75"/>
<circle cx="988.6" cy="689.6" r="4.75"/>
<circle cx="991.6" cy="709.1" r="4.75"/>
<circle cx="991.6" cy="743.3" r="1.95" stroke-width="1.75"/>
<circle cx="989.1" cy="795.2" r="4.75"/>
</g>
</g>
<path d="M20.8 20V29M27.4 24.5V29M33.9 24.5V29M40.4 24.5V29M47 24.5V29M53.5 16V29M60 24.5V29M66.6 24.5V29M73.1 24.5V29M79.6 24.5V29M86.2 20V29M92.7 24.5V29M99.2 24.5V29M105.8 24.5V29M112.3 24.5V29M118.8 16V29M125.4 24.5V29M131.9 24.5V29M138.4 24.5V29M145 24.5V29M151.5 20V29M158 24.5V29M164.6 24.5V29M171.1 24.5V29M177.6 24.5V29M184.2 16V29M190.7 24.5V29M197.2 24.5V29M203.8 24.5V29M210.3 24.5V29M216.8 20V29M223.4 24.5V29M229.9 24.5V29M236.5 24.5V29M243 24.5V29M249.5 16V29M256.1 24.5V29M262.6 24.5V29M269.1 24.5V29M275.7 24.5V29M282.2 20V29M288.7 24.5V29M295.3 24.5V29M301.8 24.5V29M308.3 24.5V29M314.9 16V29M321.4 24.5V29M327.9 24.5V29M334.5 24.5V29M341 24.5V29M347.5 20V29M354.1 24.5V29M360.6 24.5V29M367.1 24.5V29M373.7 24.5V29M380.2 16V29M386.7 24.5V29M393.3 24.5V29M399.8 24.5V29M406.3 24.5V29M412.9 20V29M419.4 24.5V29M425.9 24.5V29M432.5 24.5V29M439 24.5V29M445.5 16V29M452.1 24.5V29M458.6 24.5V29M465.1 24.5V29M471.7 24.5V29M478.2 20V29M484.7 24.5V29M491.3 24.5V29M497.8 24.5V29M504.3 24.5V29M510.9 16V29M517.4 24.5V29M523.9 24.5V29M530.5 24.5V29M537 24.5V29M543.5 20V29M550.1 24.5V29M556.6 24.5V29M563.2 24.5V29M569.7 24.5V29M576.2 16V29M582.8 24.5V29M589.3 24.5V29M595.8 24.5V29M602.4 24.5V29M608.9 20V29M615.4 24.5V29M622 24.5V29M628.5 24.5V29M635 24.5V29M641.6 16V29M648.1 24.5V29M654.6 24.5V29M661.2 24.5V29M667.7 24.5V29M674.2 20V29M680.8 24.5V29M687.3 24.5V29M693.8 24.5V29M700.4 24.5V29M706.9 16V29M713.4 24.5V29M720 24.5V29M726.5 24.5V29M733 24.5V29M739.6 20V29M746.1 24.5V29M752.6 24.5V29M759.2 24.5V29M765.7 24.5V29M772.2 16V29M778.8 24.5V29M785.3 24.5V29M791.8 24.5V29M798.4 24.5V29M804.9 20V29M811.4 24.5V29M818 24.5V29M824.5 24.5V29M831 24.5V29M837.6 16V29M844.1 24.5V29M850.6 24.5V29M857.2 24.5V29M863.7 24.5V29M870.2 20V29M876.8 24.5V29M883.3 24.5V29M889.9 24.5V29M896.4 24.5V29M902.9 16V29M909.5 24.5V29M916 24.5V29M922.5 24.5V29M929.1 24.5V29M935.6 20V29M942.1 24.5V29M948.7 24.5V29M955.2 24.5V29M961.7 24.5V29M968.3 16V29M974.8 24.5V29M981.3 24.5V29M987.9 24.5V29M994.4 24.5V29M1000.9 20V29M1007.5 24.5V29M1014 24.5V29M1020.5 24.5V29M1027.1 24.5V29M1033.6 16V29M1040.1 24.5V29M1046.7 24.5V29M1053.2 24.5V29M1059.7 24.5V29M1066.3 20V29M1072.8 24.5V29M1079.3 24.5V29M1085.9 24.5V29M1092.4 24.5V29M1098.9 16V29M1105.5 24.5V29M1112 24.5V29M1118.5 24.5V29M1125.1 24.5V29M1131.6 20V29M1138.1 24.5V29M1144.7 24.5V29M1151.2 24.5V29M1157.7 24.5V29M1164.3 16V29M1170.8 24.5V29M1177.3 24.5V29M1183.9 24.5V29M1190.4 24.5V29M1197 20V29M1203.5 24.5V29M1210 24.5V29M1216.6 24.5V29M1223.1 24.5V29M1229.6 16V29M1236.2 24.5V29M1242.7 24.5V29M1249.2 24.5V29M1255.8 24.5V29M1262.3 20V29M1268.8 24.5V29M1275.4 24.5V29M1281.9 24.5V29M1288.4 24.5V29M1295 16V29M1301.5 24.5V29M1308 24.5V29M12.5 29.4H17M12.5 35.9H17M12.5 42.4H17M8 49H17M12.5 55.5H17M12.5 62H17M12.5 68.5H17M12.5 75.1H17M4 81.6H17M12.5 88.1H17M12.5 94.7H17M12.5 101.2H17M12.5 107.7H17M8 114.2H17M12.5 120.8H17M12.5 127.3H17M12.5 133.8H17M12.5 140.3H17M4 146.9H17M12.5 153.4H17M12.5 159.9H17M12.5 166.4H17M12.5 173H17M8 179.5H17M12.5 186H17M12.5 192.5H17M12.5 199.1H17M12.5 205.6H17M4 212.1H17M12.5 218.6H17M12.5 225.2H17M12.5 231.7H17M12.5 238.2H17M8 244.8H17M12.5 251.3H17M12.5 257.8H17M12.5 264.3H17M12.5 270.9H17M4 277.4H17M12.5 283.9H17M12.5 290.4H17M12.5 297H17M12.5 303.5H17M8 310H17M12.5 316.5H17M12.5 323.1H17M12.5 329.6H17M12.5 336.1H17M4 342.6H17M12.5 349.2H17M12.5 355.7H17M12.5 362.2H17M12.5 368.7H17M8 375.3H17M12.5 381.8H17M12.5 388.3H17M12.5 394.8H17M12.5 401.4H17M4 407.9H17M12.5 414.4H17M12.5 421H17M12.5 427.5H17M12.5 434H17M8 440.5H17M12.5 447.1H17M12.5 453.6H17M12.5 460.1H17M12.5 466.6H17M4 473.2H17M12.5 479.7H17M12.5 486.2H17M12.5 492.7H17M12.5 499.3H17M8 505.8H17M12.5 512.3H17M12.5 518.8H17M12.5 525.4H17M12.5 531.9H17M4 538.4H17M12.5 544.9H17M12.5 551.5H17M12.5 558H17M12.5 564.5H17M8 571H17M12.5 577.6H17M12.5 584.1H17M12.5 590.6H17M12.5 597.2H17M4 603.7H17M12.5 610.2H17M12.5 616.7H17M12.5 623.3H17M12.5 629.8H17M8 636.3H17M12.5 642.8H17M12.5 649.4H17M12.5 655.9H17M12.5 662.4H17M4 668.9H17M12.5 675.5H17M12.5 682H17M12.5 688.5H17M12.5 695H17M8 701.6H17M12.5 708.1H17M12.5 714.6H17M12.5 721.1H17M12.5 727.7H17M4 734.2H17M12.5 740.7H17M12.5 747.3H17M12.5 753.8H17M12.5 760.3H17M8 766.8H17M12.5 773.4H17M12.5 779.9H17M12.5 786.4H17M12.5 792.9H17M4 799.5H17M12.5 806H17M12.5 812.5H17M12.5 819H17" stroke="#c4c4c4" stroke-width="1" fill="none"/>
<g fill="#fff" font-family="Liberation Sans, sans-serif" font-size="10.8" opacity="0.995">
<g clip-path="url(#tr)"><text x="-8.6" y="20.8">-1220</text><text x="56.7" y="20.8">-1200</text><text x="122" y="20.8">-1180</text><text x="187.4" y="20.8">-1160</text><text x="252.7" y="20.8">-1140</text><text x="318.1" y="20.8">-1120</text><text x="383.4" y="20.8">-1100</text><text x="448.7" y="20.8">-1080</text><text x="514.1" y="20.8">-1060</text><text x="579.4" y="20.8">-1040</text><text x="644.8" y="20.8">-1020</text><text x="710.1" y="20.8">-1000</text><text x="775.4" y="20.8">-980</text><text x="840.8" y="20.8">-960</text><text x="906.1" y="20.8">-940</text><text x="971.5" y="20.8">-920</text><text x="1036.8" y="20.8">-900</text><text x="1102.1" y="20.8">-880</text><text x="1167.5" y="20.8">-860</text><text x="1232.8" y="20.8">-840</text><text x="1298.2" y="20.8">-820</text><text x="1363.5" y="20.8">-800</text></g>
<text transform="translate(8.3 79.1) rotate(-90)">860</text><text transform="translate(8.3 144.4) rotate(-90)">840</text><text transform="translate(8.3 209.6) rotate(-90)">820</text><text transform="translate(8.3 274.9) rotate(-90)">800</text><text transform="translate(8.3 340.1) rotate(-90)">780</text><text transform="translate(8.3 405.4) rotate(-90)">760</text><text transform="translate(8.3 470.7) rotate(-90)">740</text><text transform="translate(8.3 535.9) rotate(-90)">720</text><text transform="translate(8.3 601.2) rotate(-90)">700</text><text transform="translate(8.3 666.4) rotate(-90)">680</text><text transform="translate(8.3 731.7) rotate(-90)">660</text><text transform="translate(8.3 797) rotate(-90)">640</text>
</g>
<g fill="#a8a8a8"><rect x="8" y="8" width="2" height="1"/><rect x="8" y="12.5" width="2" height="2"/><rect x="8" y="17.5" width="2" height="2"/><rect x="8" y="22.5" width="2" height="2"/><rect x="8" y="26.5" width="2" height="1"/><rect x="1" y="20" width="2" height="2"/><rect x="5.5" y="20" width="2" height="2"/><rect x="10.5" y="20" width="2" height="2"/><rect x="14.5" y="20" width="1.5" height="2"/></g>
<g fill="#fff" font-family="Liberation Sans, sans-serif" opacity="0.995">
<text x="24.8" y="830.0" font-size="9.7">27.36%</text>
<text x="96.6" y="830.6" font-size="9.9">0.0°</text>
<text x="191.4" y="829.9" font-size="10.5">2</text>
<text x="279.1" y="830.7" font-size="12">0 node (in 1 object)</text>
</g>
<g fill="#f2f2f2">
<rect x="153.4" y="821.8" width="2.2" height="10"/><path d="M163.2 821.8V832L156 826.9Z"/>
<path d="M178.5 821.8V832L171.3 826.9Z"/>
<path d="M243 822.2V832.4L250.2 827.3Z"/>
<path d="M258 822.2V832.4L265.2 827.3Z"/><rect x="263.8" y="822" width="2.4" height="10"/>
</g>
<path d="M456.3 826V822.4a2.2 2.2 0 0 1 2.2 -2.2h9a2.2 2.2 0 0 1 2.2 2.2V826Z" fill="#a9a9a9"/>
<rect x="459.4" y="822.1" width="7.9" height="1.5" fill="#333"/><rect x="461.8" y="824.6" width="2.4" height="2" fill="#333"/>
<path d="M484.6 820.6L478.6 826.4" stroke="#c8c8c8" stroke-width="1.8" fill="none"/>
<g fill="none" stroke="#e6e6e6" stroke-width="1.3"><path d="M70.6 824.1l5.7 5.7l5.7 -5.7"/><path d="M131.6 824.1l5.7 5.7l5.7 -5.7"/><path d="M222.3 824.1l5.7 5.7l5.7 -5.7"/><path d="M436.3 824.1l5.7 5.7l5.7 -5.7"/></g>
</svg>
</div></body></html>
